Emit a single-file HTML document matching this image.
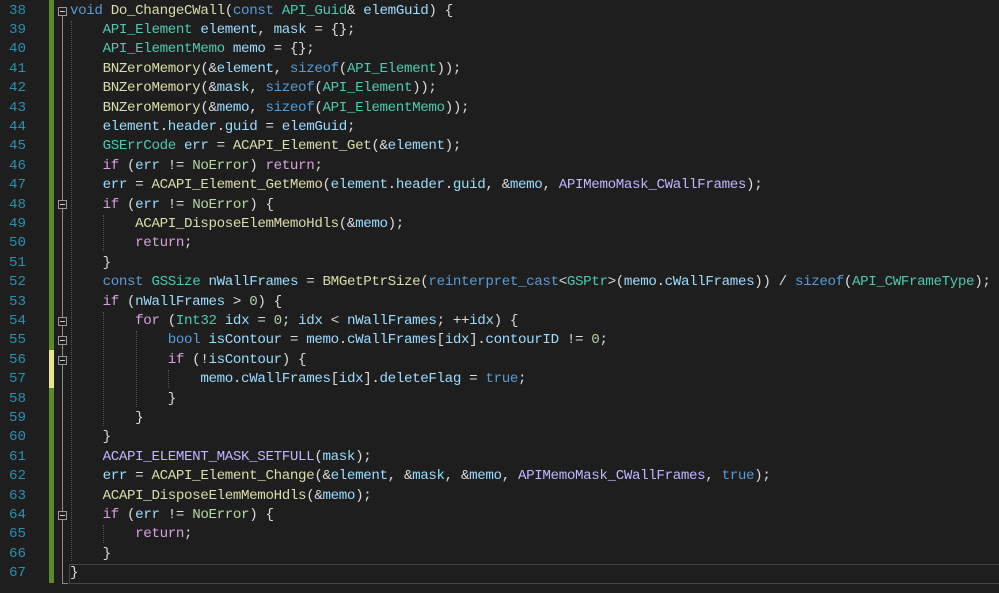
<!DOCTYPE html>
<html><head><meta charset="utf-8"><style>
body{margin:0;background:#1e1e1e;width:999px;height:593px;overflow:hidden;position:relative;font-family:"Liberation Mono",monospace;font-size:14.2px;}
.ln{position:absolute;left:0;width:26px;text-align:right;color:#2b91af;}
.code{position:absolute;left:70px;white-space:pre;color:#dcdcdc;letter-spacing:-0.37px}
.row{position:absolute;height:19.4px;line-height:19.4px;}
.k{color:#569cd6}.t{color:#4ec9b0}.f{color:#dcdcaa}.v{color:#9cdcfe}.c{color:#d8a0df}.n{color:#b5cea8}.e{color:#b8d7a3}.m{color:#beb7ff}
.bar{position:absolute;left:49px;width:5px;background:#5b8a2d}
.fold{position:absolute;left:58px;width:7px;height:7px;border:1px solid #999;background:#1e1e1e}
.fold:after{content:"";position:absolute;left:1px;top:3px;width:5px;height:1px;background:#ccc}
.vl{position:absolute;left:62px;width:1px;background:#8a8a8a}
.g{position:absolute;width:0;border-left:1px dotted #555}
</style></head><body>
<div class="bar" style="top:0;height:583px"></div>
<div class="bar" style="top:350px;height:38px;background:#e6e68a"></div>
<div class="vl" style="top:12px;height:572px"></div>
<div style="position:absolute;left:62px;top:583px;width:6px;height:1px;background:#8a8a8a"></div>
<div style="position:absolute;left:69px;top:564px;width:930px;height:18px;border:1px solid #464646;border-right:none"></div>
<div class="g" style="left:71px;top:21px;height:540px"></div>
<div class="g" style="left:103px;top:215px;height:36px"></div>
<div class="g" style="left:103px;top:312px;height:114px"></div>
<div class="g" style="left:136px;top:331px;height:76px"></div>
<div class="g" style="left:168px;top:370px;height:18px"></div>
<div class="g" style="left:103px;top:525px;height:18px"></div>
<div class="fold" style="top:7px"></div>
<div class="fold" style="top:200px"></div>
<div class="fold" style="top:317px"></div>
<div class="fold" style="top:336px"></div>
<div class="fold" style="top:356px"></div>
<div class="fold" style="top:511px"></div>
<div class="ln row" style="top:1.5px">38</div><div class="code row" style="top:1.5px"><span class="k">void</span> <span class="f">Do_ChangeCWall</span>(<span class="k">const</span> <span class="t">API_Guid</span>&amp; <span class="v">elemGuid</span>) {</div>
<div class="ln row" style="top:20.9px">39</div><div class="code row" style="top:20.9px">    <span class="t">API_Element</span> <span class="v">element</span>, <span class="v">mask</span> = {};</div>
<div class="ln row" style="top:40.3px">40</div><div class="code row" style="top:40.3px">    <span class="t">API_ElementMemo</span> <span class="v">memo</span> = {};</div>
<div class="ln row" style="top:59.7px">41</div><div class="code row" style="top:59.7px">    <span class="f">BNZeroMemory</span>(&amp;<span class="v">element</span>, <span class="k">sizeof</span>(<span class="t">API_Element</span>));</div>
<div class="ln row" style="top:79.1px">42</div><div class="code row" style="top:79.1px">    <span class="f">BNZeroMemory</span>(&amp;<span class="v">mask</span>, <span class="k">sizeof</span>(<span class="t">API_Element</span>));</div>
<div class="ln row" style="top:98.5px">43</div><div class="code row" style="top:98.5px">    <span class="f">BNZeroMemory</span>(&amp;<span class="v">memo</span>, <span class="k">sizeof</span>(<span class="t">API_ElementMemo</span>));</div>
<div class="ln row" style="top:117.9px">44</div><div class="code row" style="top:117.9px">    <span class="v">element</span>.<span class="v">header</span>.<span class="v">guid</span> = <span class="v">elemGuid</span>;</div>
<div class="ln row" style="top:137.3px">45</div><div class="code row" style="top:137.3px">    <span class="t">GSErrCode</span> <span class="v">err</span> = <span class="f">ACAPI_Element_Get</span>(&amp;<span class="v">element</span>);</div>
<div class="ln row" style="top:156.7px">46</div><div class="code row" style="top:156.7px">    <span class="c">if</span> (<span class="v">err</span> != <span class="e">NoError</span>) <span class="c">return</span>;</div>
<div class="ln row" style="top:176.1px">47</div><div class="code row" style="top:176.1px">    <span class="v">err</span> = <span class="f">ACAPI_Element_GetMemo</span>(<span class="v">element</span>.<span class="v">header</span>.<span class="v">guid</span>, &amp;<span class="v">memo</span>, <span class="m">APIMemoMask_CWallFrames</span>);</div>
<div class="ln row" style="top:195.5px">48</div><div class="code row" style="top:195.5px">    <span class="c">if</span> (<span class="v">err</span> != <span class="e">NoError</span>) {</div>
<div class="ln row" style="top:214.9px">49</div><div class="code row" style="top:214.9px">        <span class="f">ACAPI_DisposeElemMemoHdls</span>(&amp;<span class="v">memo</span>);</div>
<div class="ln row" style="top:234.3px">50</div><div class="code row" style="top:234.3px">        <span class="c">return</span>;</div>
<div class="ln row" style="top:253.7px">51</div><div class="code row" style="top:253.7px">    }</div>
<div class="ln row" style="top:273.1px">52</div><div class="code row" style="top:273.1px">    <span class="k">const</span> <span class="t">GSSize</span> <span class="v">nWallFrames</span> = <span class="f">BMGetPtrSize</span>(<span class="k">reinterpret_cast</span>&lt;<span class="t">GSPtr</span>&gt;(<span class="v">memo</span>.<span class="v">cWallFrames</span>)) / <span class="k">sizeof</span>(<span class="t">API_CWFrameType</span>);</div>
<div class="ln row" style="top:292.5px">53</div><div class="code row" style="top:292.5px">    <span class="c">if</span> (<span class="v">nWallFrames</span> &gt; <span class="n">0</span>) {</div>
<div class="ln row" style="top:311.9px">54</div><div class="code row" style="top:311.9px">        <span class="c">for</span> (<span class="t">Int32</span> <span class="v">idx</span> = <span class="n">0</span>; <span class="v">idx</span> &lt; <span class="v">nWallFrames</span>; ++<span class="v">idx</span>) {</div>
<div class="ln row" style="top:331.3px">55</div><div class="code row" style="top:331.3px">            <span class="k">bool</span> <span class="v">isContour</span> = <span class="v">memo</span>.<span class="v">cWallFrames</span>[<span class="v">idx</span>].<span class="v">contourID</span> != <span class="n">0</span>;</div>
<div class="ln row" style="top:350.7px">56</div><div class="code row" style="top:350.7px">            <span class="c">if</span> (!<span class="v">isContour</span>) {</div>
<div class="ln row" style="top:370.1px">57</div><div class="code row" style="top:370.1px">                <span class="v">memo</span>.<span class="v">cWallFrames</span>[<span class="v">idx</span>].<span class="v">deleteFlag</span> = <span class="k">true</span>;</div>
<div class="ln row" style="top:389.5px">58</div><div class="code row" style="top:389.5px">            }</div>
<div class="ln row" style="top:408.9px">59</div><div class="code row" style="top:408.9px">        }</div>
<div class="ln row" style="top:428.3px">60</div><div class="code row" style="top:428.3px">    }</div>
<div class="ln row" style="top:447.7px">61</div><div class="code row" style="top:447.7px">    <span class="m">ACAPI_ELEMENT_MASK_SETFULL</span>(<span class="v">mask</span>);</div>
<div class="ln row" style="top:467.1px">62</div><div class="code row" style="top:467.1px">    <span class="v">err</span> = <span class="f">ACAPI_Element_Change</span>(&amp;<span class="v">element</span>, &amp;<span class="v">mask</span>, &amp;<span class="v">memo</span>, <span class="m">APIMemoMask_CWallFrames</span>, <span class="k">true</span>);</div>
<div class="ln row" style="top:486.5px">63</div><div class="code row" style="top:486.5px">    <span class="f">ACAPI_DisposeElemMemoHdls</span>(&amp;<span class="v">memo</span>);</div>
<div class="ln row" style="top:505.9px">64</div><div class="code row" style="top:505.9px">    <span class="c">if</span> (<span class="v">err</span> != <span class="e">NoError</span>) {</div>
<div class="ln row" style="top:525.3px">65</div><div class="code row" style="top:525.3px">        <span class="c">return</span>;</div>
<div class="ln row" style="top:544.7px">66</div><div class="code row" style="top:544.7px">    }</div>
<div class="ln row" style="top:564.1px">67</div><div class="code row" style="top:564.1px">}</div>
</body></html>
